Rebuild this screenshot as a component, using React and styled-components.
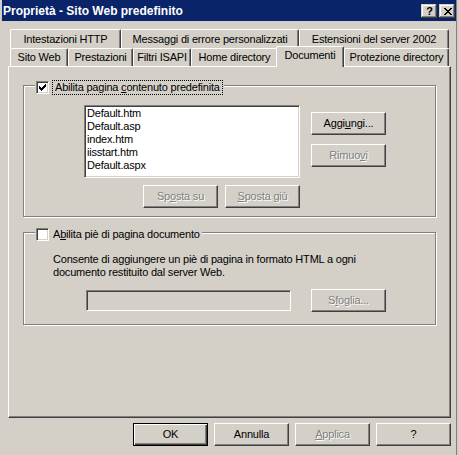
import React from 'react';
import styled, { createGlobalStyle, css } from 'styled-components';

const FACE = '#D4D0C8';
const FONT = '"Liberation Sans", Arial, sans-serif';

const Global = createGlobalStyle`
  html, body { margin: 0; padding: 0; background: ${FACE}; }
  body { font-family: ${FONT}; font-size: 11px; color: #000; letter-spacing: -0.2px; }
  * { box-sizing: border-box; }
`;

const Window = styled.div`
  width: 459px;
  height: 455px;
  background: ${FACE};
  padding: 0 3px 0 2px;
  display: flex;
  flex-direction: column;
  box-shadow: inset -2px 0 0 ${FACE}, inset -3px 0 0 #808080;
`;

const TitleBar = styled.div`
  height: 21px;
  background: #0a246a;
  display: flex;
  align-items: flex-start;
  padding: 4px 1px 0 1px;
`;

const Title = styled.div`
  color: #fff;
  font-weight: bold;
  font-size: 12px;
  line-height: 14px;
  letter-spacing: 0;
  white-space: nowrap;
`;

const CaptionButtons = styled.div`
  margin-left: auto;
  display: flex;
  gap: 2px;
`;

const CaptionBtn = styled.div`
  width: 16px;
  height: 14px;
  background: ${FACE};
  box-shadow: inset -1px -1px 0 #404040, inset 1px 1px 0 ${FACE}, inset -2px -2px 0 #808080, inset 2px 2px 0 #fff;
  display: flex;
  align-items: center;
  justify-content: center;
  font-weight: bold;
  font-size: 11px;
  line-height: 12px;
  padding-left: 1px;
`;

const Body = styled.div`
  flex: 1;
  display: flex;
  flex-direction: column;
  padding: 8px 5px 0 6px;
`;

const TabStrip = styled.div`
  margin-left: 2px;
  width: 439px;
  display: flex;
  flex-direction: column;
`;

const TabRow = styled.div`
  display: flex;
  align-items: flex-start;
  height: ${p => p.$h}px;
`;

const Tab = styled.div`
  flex: none;
  width: ${p => p.$w}px;
  height: ${p => p.$h}px;
  background: ${FACE};
  border-top: 1px solid #fff;
  border-left: 1px solid #fff;
  border-right: 1px solid #404040;
  border-top-left-radius: 2px;
  border-top-right-radius: 2px;
  box-shadow: inset -1px 0 0 #808080;
  text-align: center;
  white-space: nowrap;
  line-height: 13px;
  padding-top: ${p => p.$pt}px;
  ${p => p.$sel && css`
    position: relative;
    z-index: 2;
    width: ${p.$w + 2}px;
    height: 21px;
    margin-top: -2px;
    margin-left: -2px;
  `}
`;

const Panel = styled.div`
  width: 443px;
  height: 352px;
  border-top: 1px solid #fff;
  border-left: 1px solid #fff;
  border-right: 1px solid #404040;
  border-bottom: 1px solid #404040;
  box-shadow: inset -1px -1px 0 #808080;
  display: flex;
  flex-direction: column;
`;

const Group = styled.div`
  position: relative;
  margin: ${p => p.$mt}px 0 0 14px;
  width: 413px;
  height: ${p => p.$h}px;
  border: 1px solid #808080;
  box-shadow: inset 1px 1px 0 #fff, 1px 1px 0 #fff;
`;

const Legend = styled.div`
  position: absolute;
  left: 11px;
  top: -6px;
  height: 15px;
  display: flex;
  align-items: center;
  gap: 3px;
  padding: 0 1px;
  background: ${FACE};
`;

const CheckBox = styled.div`
  width: 13px;
  height: 13px;
  background: #fff;
  border: 1px solid;
  border-color: #808080 #fff #fff #808080;
  box-shadow: inset 1px 1px 0 #404040, inset -1px -1px 0 ${FACE};
  display: flex;
  padding: 2px 0 0 2px;
`;

const CheckLabel = styled.div`
  height: 15px;
  line-height: 13px;
  white-space: nowrap;
  border: 1px dotted ${p => (p.$focus ? '#000' : 'transparent')};
  padding: 0 ${p => (p.$focus ? 2 : 0)}px;
`;

const Mn = styled.span`
  text-decoration: underline;
`;

const ListGrid = styled.div`
  display: grid;
  grid-template-columns: 216px 75px;
  column-gap: 11px;
  row-gap: 7px;
  margin: 19px 0 0 60px;
`;

const Sunken = styled.div`
  border: 1px solid;
  border-color: #808080 #fff #fff #808080;
  box-shadow: inset 1px 1px 0 #404040, inset -1px -1px 0 ${FACE};
`;

const ListBox = styled(Sunken)`
  height: 73px;
  background: #fff;
  padding: 1px 2px;
`;

const ListItem = styled.div`
  line-height: 13px;
  white-space: nowrap;
`;

const SideButtons = styled.div`
  display: flex;
  flex-direction: column;
  gap: 9px;
  padding-top: 7px;
`;

const MoveRow = styled.div`
  display: flex;
  justify-content: flex-end;
  gap: 7px;
`;

const Btn = styled.button`
  flex: none;
  width: 75px;
  height: 23px;
  margin: 0;
  padding: 0;
  font-family: ${FONT};
  font-size: 11px;
  letter-spacing: -0.2px;
  line-height: 13px;
  background: ${FACE};
  color: #000;
  border: 1px solid;
  border-color: #fff #404040 #404040 #fff;
  box-shadow: inset -1px -1px 0 #808080;
  display: flex;
  align-items: center;
  justify-content: center;
  &:disabled {
    color: #808080;
    text-shadow: 1px 1px 0 #fff;
  }
  ${p => p.$default && css`
    border-color: #000;
    box-shadow: inset 1px 1px 0 #fff, inset -1px -1px 0 #404040, inset -2px -2px 0 #808080;
  `}
`;

const Desc = styled.div`
  margin: 20px 0 0 29px;
  line-height: 13px;
  width: 340px;
`;

const FieldRow = styled.div`
  display: flex;
  align-items: center;
  gap: 20px;
  margin: 10px 0 0 62px;
`;

const TextField = styled(Sunken)`
  width: 205px;
  height: 21px;
  background: ${FACE};
`;

const ButtonRow = styled.div`
  display: flex;
  justify-content: flex-end;
  gap: 6px;
  margin-top: 5px;
  width: 443px;
`;

const Pixels = ({ rows }) => {
  const w = rows[0].length;
  const h = rows.length;
  let d = '';
  rows.forEach((r, y) =>
    [...r].forEach((c, x) => {
      if (c === 'x') d += `M${x} ${y}h1v1h-1z`;
    })
  );
  return (
    <svg width={w} height={h} viewBox={`0 0 ${w} ${h}`} shapeRendering="crispEdges" style={{ display: 'block' }}>
      <path d={d} fill="#000" />
    </svg>
  );
};

const CHECK = ['......x', '.....xx', 'x...xxx', 'xx.xxx.', 'xxxxx..', '.xxx...', '..x....'];
const CLOSE = ['xx....xx', '.xx..xx.', '..xxxx..', '...xx...', '..xxxx..', '.xx..xx.', 'xx....xx'];

const row1 = [
  { label: 'Intestazioni HTTP', w: 111 },
  { label: 'Messaggi di errore personalizzati', w: 178 },
  { label: 'Estensioni del server 2002', w: 150 },
];
const row2 = [
  { label: 'Sito Web', w: 58 },
  { label: 'Prestazioni', w: 65 },
  { label: 'Filtri ISAPI', w: 58 },
  { label: 'Home directory', w: 87 },
  { label: 'Documenti', w: 66, sel: true },
  { label: 'Protezione directory', w: 105 },
];
const docs = ['Default.htm', 'Default.asp', 'index.htm', 'iisstart.htm', 'Default.aspx'];

export default function App() {
  return (
    <>
      <Global />
      <Window>
        <TitleBar>
          <Title>Proprietà - Sito Web predefinito</Title>
          <CaptionButtons>
            <CaptionBtn>?</CaptionBtn>
            <CaptionBtn>
              <Pixels rows={CLOSE} />
            </CaptionBtn>
          </CaptionButtons>
        </TitleBar>
        <Body>
          <TabStrip>
            <TabRow $h={19}>
              {row1.map(t => (
                <Tab key={t.label} $w={t.w} $h={19} $pt={3}>{t.label}</Tab>
              ))}
            </TabRow>
            <TabRow $h={18}>
              {row2.map(t => (
                <Tab key={t.label} $w={t.w} $h={18} $pt={2} $sel={t.sel}>{t.label}</Tab>
              ))}
            </TabRow>
          </TabStrip>
          <Panel>
            <Group $mt={18} $h={132}>
              <Legend>
                <CheckBox>
                  <Pixels rows={CHECK} />
                </CheckBox>
                <CheckLabel $focus>
                  Abilita pagina <Mn>c</Mn>ontenuto predefinita
                </CheckLabel>
              </Legend>
              <ListGrid>
                <ListBox>
                  {docs.map(d => (
                    <ListItem key={d}>{d}</ListItem>
                  ))}
                </ListBox>
                <SideButtons>
                  <Btn>Aggi<Mn>u</Mn>ngi...</Btn>
                  <Btn disabled>Rimuo<Mn>v</Mn>i</Btn>
                </SideButtons>
                <MoveRow>
                  <Btn disabled>Sp<Mn>o</Mn>sta su</Btn>
                  <Btn disabled><Mn>S</Mn>posta giù</Btn>
                </MoveRow>
              </ListGrid>
            </Group>
            <Group $mt={15} $h={93}>
              <Legend>
                <CheckBox />
                <CheckLabel>
                  A<Mn>b</Mn>ilita piè di pagina documento
                </CheckLabel>
              </Legend>
              <Desc>
                Consente di aggiungere un piè di pagina in formato HTML a ogni documento restituito dal server Web.
              </Desc>
              <FieldRow>
                <TextField />
                <Btn disabled>S<Mn>f</Mn>oglia...</Btn>
              </FieldRow>
            </Group>
          </Panel>
          <ButtonRow>
            <Btn $default>OK</Btn>
            <Btn>Annulla</Btn>
            <Btn disabled><Mn>A</Mn>pplica</Btn>
            <Btn>?</Btn>
          </ButtonRow>
        </Body>
      </Window>
    </>
  );
}
